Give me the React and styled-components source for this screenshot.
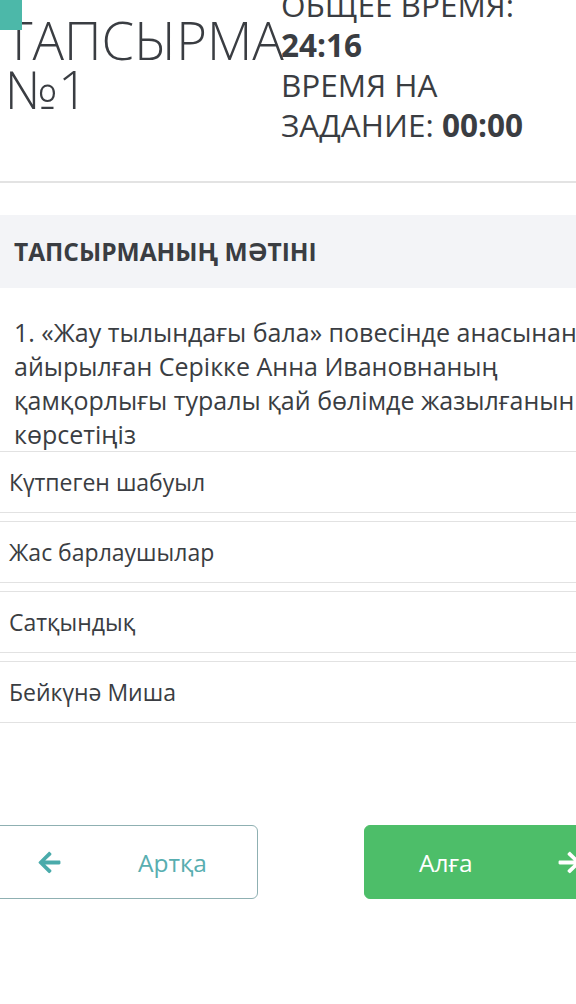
import React from "react";
import styled, { createGlobalStyle } from "styled-components";
import { FaArrowLeft, FaArrowRight } from "react-icons/fa";

const options = [
  "Күтпеген шабуыл",
  "Жас барлаушылар",
  "Сатқындық",
  "Бейкүнә Миша",
];

const App = () => {
  return (
    <>
      <GlobalStyle />
      <Page>
        <Header>
          <CornerBadge />
          <Title>
            ТАПСЫРМА
            <br />
            №1
          </Title>
          <Timers>
            <TimerLine>
              ОБЩЕЕ ВРЕМЯ: <b>24:16</b>
            </TimerLine>
            <TimerLine>
              ВРЕМЯ НА ЗАДАНИЕ: <b>00:00</b>
            </TimerLine>
          </Timers>
        </Header>
        <Divider />
        <SectionHeader>ТАПСЫРМАНЫҢ МӘТІНІ</SectionHeader>
        <Question>
          1. «Жау тылындағы бала» повесінде анасынан айырылған Серікке Анна
          Ивановнаның қамқорлығы туралы қай бөлімде жазылғанын көрсетіңіз
        </Question>
        <OptionList>
          {options.map(option => (
            <Option key={option}>{option}</Option>
          ))}
        </OptionList>
        <ButtonRow>
          <NavButton>
            <FaArrowLeft />
            <span>Артқа</span>
          </NavButton>
          <NavButton primary>
            <span>Алға</span>
            <FaArrowRight />
          </NavButton>
        </ButtonRow>
      </Page>
    </>
  );
};

const GlobalStyle = createGlobalStyle`
  html, body {
    margin: 0;
    padding: 0;
    background: #ffffff;
    overflow: hidden;
  }
  body {
    font-family: "Open Sans", "Noto Sans", sans-serif;
    color: #3a3d42;
  }
`;

const Page = styled.div`
  width: 576px;
  margin-top: -22px;
`;

const Header = styled.div`
  position: relative;
  display: flex;
  align-items: flex-start;
  padding-bottom: 36px;
`;

const CornerBadge = styled.div`
  position: absolute;
  left: 0;
  top: 22px;
  width: 22px;
  height: 30px;
  background: #4cb8a9;
`;

const Title = styled.h1`
  margin: 0;
  width: 281px;
  flex-shrink: 0;
  padding: 37px 0 0 5px;
  box-sizing: border-box;
  font-size: 52.5px;
  font-weight: 300;
  line-height: 49px;
  color: #3a3d42;
  white-space: nowrap;
`;

const Timers = styled.div`
  display: flex;
  flex-direction: column;
  font-size: 31.5px;
  line-height: 40px;
  font-weight: 400;
  color: #3a3d42;
  width: 262px;
  padding-top: 7px;

  b {
    font-weight: 700;
  }
`;

const TimerLine = styled.div``;

const Divider = styled.div`
  height: 2px;
  background: #e3e3e3;
  margin-bottom: 32px;
`;

const SectionHeader = styled.div`
  background: #f3f4f7;
  height: 73px;
  display: flex;
  align-items: center;
  padding-left: 14px;
  font-size: 24.5px;
  font-weight: 700;
  color: #3a3d42;
`;

const Question = styled.p`
  margin: 0;
  padding: 27px 0 0 14px;
  font-size: 25px;
  line-height: 34px;
  color: #3a3d42;
  width: 570px;
`;

const OptionList = styled.div`
  display: flex;
  flex-direction: column;
  gap: 8px;
`;

const Option = styled.div`
  height: 60px;
  display: flex;
  align-items: center;
  padding-left: 9px;
  border-top: 1px solid #e2e2e2;
  border-bottom: 1px solid #e2e2e2;
  font-size: 23px;
  color: #3a3d42;
`;

const ButtonRow = styled.div`
  display: flex;
  gap: 106px;
  margin: 102px 0 0 -22px;
`;

const NavButton = styled.button`
  width: 280px;
  height: 74px;
  flex-shrink: 0;
  box-sizing: border-box;
  border-radius: 6px;
  display: flex;
  align-items: center;
  font-family: "Open Sans", "Noto Sans", sans-serif;
  font-size: 24.5px;
  cursor: pointer;
  border: 1px solid ${props => (props.primary ? "#4dbe69" : "#8fb0b2")};
  background: ${props => (props.primary ? "#4dbe69" : "#ffffff")};
  color: ${props => (props.primary ? "#ffffff" : "#58aeb0")};
  padding: ${props => (props.primary ? "0 0 0 54px" : "0 0 0 58px")};
  gap: ${props => (props.primary ? "84px" : "76px")};

  svg {
    width: 25px;
    height: 25px;
    color: ${props => (props.primary ? "#ffffff" : "#4aabab")};
  }
`;

export default App;
